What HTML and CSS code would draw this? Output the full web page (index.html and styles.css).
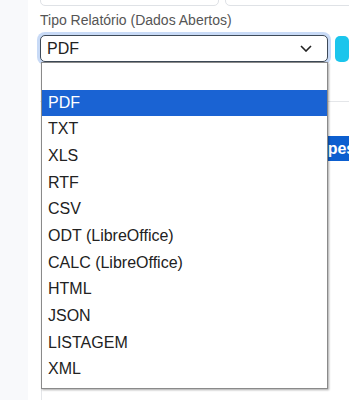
FILE: index.html
```html
<!DOCTYPE html>
<html lang="pt-BR">
<head>
    <meta charset="UTF-8">
    <meta name="viewport" content="width=device-width, initial-scale=1.0">
    <title>Relatórios</title>
    <link rel="stylesheet" href="styles.css">
</head>
<body>
    <div class="page">
        <aside class="sidebar"></aside>

        <main class="main">
            <div class="field-row">
                <input type="text" class="text-input input-left">
                <input type="text" class="text-input input-right">
            </div>

            <label class="field-label">Tipo Relatório (Dados Abertos)</label>
            <div class="select-row">
                <div class="select-wrap">
                    <div class="select-box">
                        <span class="select-value">PDF</span>
                        <svg class="chevron" width="12" height="7" viewBox="0 0 12 7">
                            <path d="M1 1l5 5 5-5" fill="none" stroke="#222" stroke-width="1.6"/>
                        </svg>
                    </div>
                    <ul class="option-list">
                        <li class="option"></li>
                        <li class="option selected">PDF</li>
                        <li class="option">TXT</li>
                        <li class="option">XLS</li>
                        <li class="option">RTF</li>
                        <li class="option">CSV</li>
                        <li class="option">ODT (LibreOffice)</li>
                        <li class="option">CALC (LibreOffice)</li>
                        <li class="option">HTML</li>
                        <li class="option">JSON</li>
                        <li class="option">LISTAGEM</li>
                        <li class="option">XML</li>
                    </ul>
                </div>
                <button type="button" class="btn-info"></button>
            </div>

            <hr class="divider">

            <div class="actions">
                <button type="button" class="btn-primary">Nova pesquisa</button>
            </div>

            <div class="results"></div>
        </main>
    </div>
</body>
</html>
```

FILE: styles.css
```css
* {
    margin: 0;
    padding: 0;
    box-sizing: border-box;
}

body {
    font-family: "Liberation Sans", Arial, sans-serif;
    background: #ffffff;
    color: #222;
    overflow: hidden;
}

.page {
    display: flex;
    min-height: 100vh;
}

.sidebar {
    width: 28px;
    flex-shrink: 0;
    background: #f8f9fb;
}

.main {
    flex: 1;
    padding-left: 12px;
    min-width: 0;
}

.field-row {
    display: flex;
    gap: 6px;
    margin-top: -24px;
}

.text-input {
    height: 30px;
    border: 1px solid #dfe2e6;
    border-radius: 5px;
    background: #fff;
}

.input-left {
    width: 191px;
}

.input-right {
    width: 140px;
}

.field-label {
    display: block;
    margin-top: 6px;
    font-size: 14px;
    color: #555;
    line-height: 17px;
}

.select-row {
    display: flex;
    gap: 7px;
    margin-top: 6px;
}

.select-wrap {
    position: relative;
    width: 288px;
    flex-shrink: 0;
}

.select-box {
    height: 27px;
    border: 1px solid #3e4a58;
    border-radius: 5px;
    box-shadow: 0 0 0 3px #c8daf6;
    display: flex;
    align-items: center;
    justify-content: space-between;
    padding: 0 15px 0 6px;
    background: #fff;
}

.select-value {
    font-size: 16px;
    color: #222;
}

.option-list {
    position: absolute;
    top: 27px;
    left: 1px;
    width: 287px;
    list-style: none;
    background: #fff;
    border: 1px solid #8a8a8a;
    box-shadow: 1px 1px 2px rgba(0, 0, 0, 0.35);
    padding-bottom: 5px;
    z-index: 10;
}

.option {
    height: 26.67px;
    line-height: 26.67px;
    padding-left: 6px;
    font-size: 16px;
    color: #222;
}

.option.selected {
    background: #1a63d3;
    color: #fff;
}

.btn-info {
    width: 30px;
    height: 26px;
    margin-top: 1px;
    border: none;
    border-radius: 5px;
    background: #1bc5ec;
}

.divider {
    border: none;
    border-top: 1px solid #e4e6e9;
    margin-top: 39px;
}

.actions {
    display: flex;
    justify-content: flex-end;
    margin-top: 34px;
    margin-right: -58px;
}

.btn-primary {
    height: 25px;
    padding: 0 10px;
    border: none;
    background: #0d5fcf;
    color: #fff;
    font-family: "Liberation Sans", Arial, sans-serif;
    font-weight: bold;
    font-size: 16px;
}

.results {
    margin-top: 40px;
    margin-left: 1px;
    height: 300px;
    border-left: 1px solid #e4e6e9;
}
```
